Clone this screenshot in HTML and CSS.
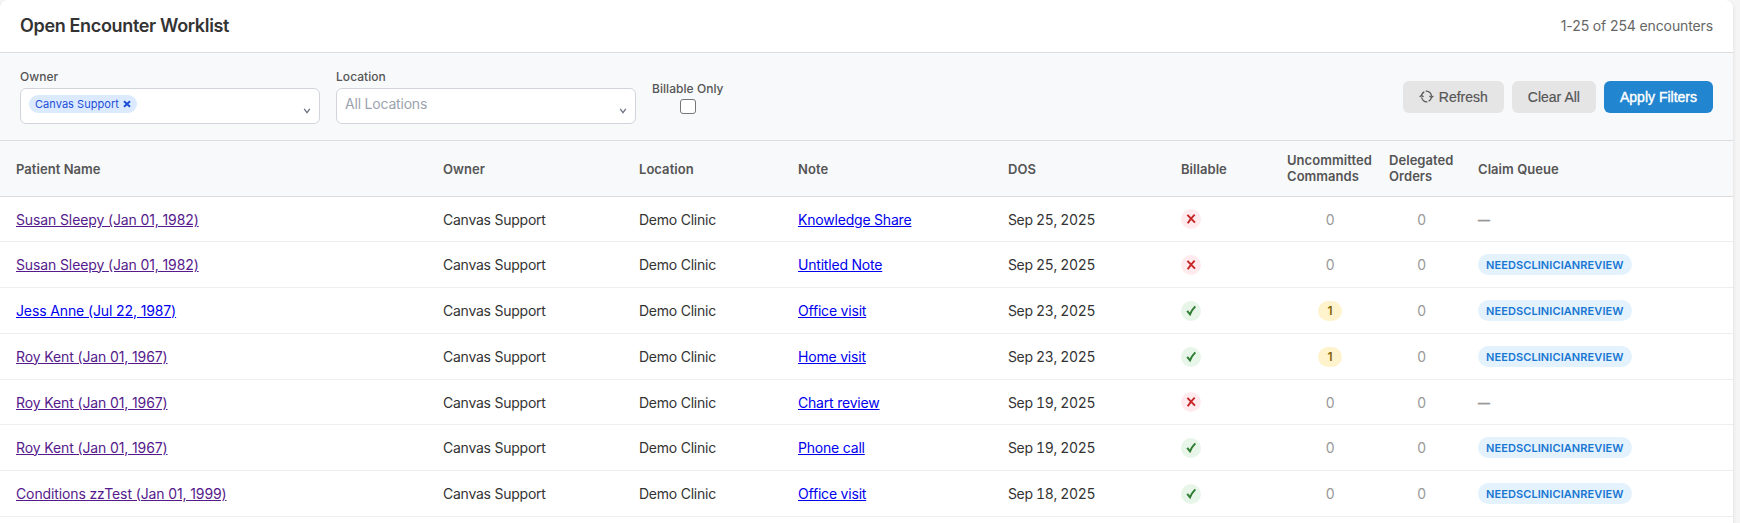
FILE: index.html
```html
<!DOCTYPE html>
<html lang="en">
<head>
<meta charset="utf-8">
<title>Open Encounter Worklist</title>
<link rel="stylesheet" href="styles.css">
</head>
<body>
<svg class="sprite" aria-hidden="true">
  <symbol id="cross" viewBox="0 0 20 20"><path d="M6.4 5.9Q9.6 9.2 14 13.6M13.7 5.6Q9.5 9.6 6.7 14.3" fill="none" stroke="currentColor" stroke-width="2"/></symbol>
  <symbol id="check" viewBox="0 0 20 20"><path d="M6.2 9.9L9 13.4Q10.9 8.8 14.3 5.4" fill="none" stroke="currentColor" stroke-width="2"/></symbol>
</svg>
<main class="panel">
  <header class="panel-header">
    <h1 class="title">Open Encounter Worklist</h1>
    <span class="count">1-25 of 254 encounters</span>
  </header>
  <section class="filters">
    <div class="field">
      <label class="label">Owner</label>
      <div class="select">
        <span class="chip">Canvas Support<svg class="chip-x" viewBox="0 0 8 8"><path d="M1 1.2L7 6.8M7 1.2L1 6.8" stroke="currentColor" stroke-width="2"/></svg></span>
        <svg class="caret" viewBox="0 0 8 6"><path d="M1.2 .8L4 4.6L6.8 .8" fill="none" stroke="currentColor" stroke-width="1.3"/></svg>
      </div>
    </div>
    <div class="field">
      <label class="label">Location</label>
      <div class="select">
        <span class="placeholder">All Locations</span>
        <svg class="caret" viewBox="0 0 8 6"><path d="M1.2 .8L4 4.6L6.8 .8" fill="none" stroke="currentColor" stroke-width="1.3"/></svg>
      </div>
    </div>
    <div class="check-field">
      <label class="label">Billable Only</label>
      <span class="checkbox"></span>
    </div>
    <div class="actions">
      <button class="btn"><svg class="refresh" viewBox="0 0 15 13"><g fill="none" stroke="currentColor" stroke-width="1.2"><path d="M2.5 6.2A5 5 0 0 1 5.3 1.9M6.7 1.2A5.2 5.2 0 0 1 12.5 6.6M12.5 7.2A5 5 0 0 1 9.6 11.2M8.3 11.8A5.2 5.2 0 0 1 2.6 7.2"/><path d="M.6 6.8L2.5 5.4L4.6 6.8M10.4 6L12.5 7.4L14.4 6"/></g></svg>Refresh</button>
      <button class="btn">Clear All</button>
      <button class="btn primary">Apply Filters</button>
    </div>
  </section>
  <table class="worklist">
    <colgroup><col class="c-patient"><col class="c-owner"><col class="c-location"><col class="c-note"><col class="c-dos"><col class="c-billable"><col class="c-commands"><col class="c-orders"><col></colgroup>
    <thead>
      <tr><th>Patient Name</th><th>Owner</th><th>Location</th><th>Note</th><th>DOS</th><th>Billable</th><th class="tight">Uncommitted<br>Commands</th><th class="tight">Delegated<br>Orders</th><th>Claim Queue</th></tr>
    </thead>
    <tbody>
      <tr class="short"><td><a class="visited" href="#p">Susan Sleepy (Jan 01, 1982)</a></td><td class="name">Canvas Support</td><td class="name">Demo Clinic</td><td><a class="note" href="#n">Knowledge Share</a></td><td class="date">Sep 25, 2025</td><td class="flag"><svg class="mark no"><use href="#cross"/></svg></td><td class="num">0</td><td class="num">0</td><td class="none"><span class="dash">—</span></td></tr>
      <tr><td><a class="visited" href="#p">Susan Sleepy (Jan 01, 1982)</a></td><td class="name">Canvas Support</td><td class="name">Demo Clinic</td><td><a class="note" href="#n">Untitled Note</a></td><td class="date">Sep 25, 2025</td><td class="flag"><svg class="mark no"><use href="#cross"/></svg></td><td class="num">0</td><td class="num">0</td><td><span class="queue">NEEDSCLINICIANREVIEW</span></td></tr>
      <tr><td><a href="#p">Jess Anne (Jul 22, 1987)</a></td><td class="name">Canvas Support</td><td class="name">Demo Clinic</td><td><a class="note" href="#n">Office visit</a></td><td class="date">Sep 23, 2025</td><td class="flag"><svg class="mark yes"><use href="#check"/></svg></td><td class="num"><span class="badge">1</span></td><td class="num">0</td><td><span class="queue">NEEDSCLINICIANREVIEW</span></td></tr>
      <tr><td><a class="visited" href="#p">Roy Kent (Jan 01, 1967)</a></td><td class="name">Canvas Support</td><td class="name">Demo Clinic</td><td><a class="note" href="#n">Home visit</a></td><td class="date">Sep 23, 2025</td><td class="flag"><svg class="mark yes"><use href="#check"/></svg></td><td class="num"><span class="badge">1</span></td><td class="num">0</td><td><span class="queue">NEEDSCLINICIANREVIEW</span></td></tr>
      <tr class="short"><td><a class="visited" href="#p">Roy Kent (Jan 01, 1967)</a></td><td class="name">Canvas Support</td><td class="name">Demo Clinic</td><td><a class="note" href="#n">Chart review</a></td><td class="date">Sep 19, 2025</td><td class="flag"><svg class="mark no"><use href="#cross"/></svg></td><td class="num">0</td><td class="num">0</td><td class="none"><span class="dash">—</span></td></tr>
      <tr><td><a class="visited" href="#p">Roy Kent (Jan 01, 1967)</a></td><td class="name">Canvas Support</td><td class="name">Demo Clinic</td><td><a class="note" href="#n">Phone call</a></td><td class="date">Sep 19, 2025</td><td class="flag"><svg class="mark yes"><use href="#check"/></svg></td><td class="num">0</td><td class="num">0</td><td><span class="queue">NEEDSCLINICIANREVIEW</span></td></tr>
      <tr><td><a class="visited" href="#p">Conditions zzTest (Jan 01, 1999)</a></td><td class="name">Canvas Support</td><td class="name">Demo Clinic</td><td><a class="note" href="#n">Office visit</a></td><td class="date">Sep 18, 2025</td><td class="flag"><svg class="mark yes"><use href="#check"/></svg></td><td class="num">0</td><td class="num">0</td><td><span class="queue">NEEDSCLINICIANREVIEW</span></td></tr>
    </tbody>
  </table>
</main>
</body>
</html>
```
FILE: styles.css
```css
* { box-sizing: border-box; }
body {
  margin: 0;
  height: 523px;
  overflow: hidden;
  background: #f5f5f5;
  color: #333;
  font: 14px/20px Inter, "Liberation Sans", sans-serif;
  letter-spacing: -0.12px;
}
.sprite { display: none; }
.panel {
  width: 1733px;
  height: 540px;
  overflow: hidden;
  background: #fff;
  border-radius: 8px;
  box-shadow: 0 2px 4px rgba(0, 0, 0, .1);
}
.panel-header {
  display: flex;
  align-items: center;
  justify-content: space-between;
  height: 53px;
  padding: 0 20px;
  border-bottom: 1px solid #ddd;
}
.title { margin: 0; font-size: 18px; font-weight: 600; letter-spacing: -0.34px; }
.count { color: #666; }
.filters {
  display: flex;
  align-items: center;
  gap: 16px;
  height: 88px;
  padding: 0 20px;
  background: #f8f9fb;
  border-bottom: 1px solid #ddd;
}
.field { display: flex; flex-direction: column; gap: 4px; width: 300px; padding-bottom: 1px; }
.label { color: #555; font-size: 12px; line-height: 15px; font-weight: 500; letter-spacing: .05px; }
.select {
  display: flex;
  justify-content: space-between;
  height: 36px;
  padding: 6px 8px;
  background: #fff;
  border: 1px solid #d1d5db;
  border-radius: 6px;
}
.chip {
  display: flex;
  align-items: center;
  gap: 4px;
  height: 18px;
  padding: 0 6px;
  border-radius: 9px;
  background: #dbeafe;
  color: #1d4ed8;
  font-size: 11px;
  letter-spacing: .05px;
}
.chip-x { width: 8px; height: 8px; }
.placeholder { color: #9ca3af; line-height: 18px; letter-spacing: -.2px; }
.caret { width: 8px; height: 6px; margin-top: 13px; color: #6b7280; }
.check-field { display: flex; flex-direction: column; align-items: center; gap: 3px; padding-top: 2px; }
.checkbox { width: 16px; height: 15px; border: 1px solid #767676; border-radius: 3px; background: #fff; }
.actions { display: flex; gap: 8px; margin-left: auto; }
.btn {
  display: flex;
  align-items: center;
  gap: 5px;
  height: 32px;
  padding: 0 16px;
  border: 0;
  border-radius: 6px;
  background: #e5e5e5;
  color: #555;
  font: 14px/20px "Liberation Sans", Arial, sans-serif;
  -webkit-text-stroke: .2px currentColor;
}
.btn.primary { background: #2185d0; color: #fff; -webkit-text-stroke: .4px #fff; }
.refresh { width: 15px; height: 13px; }
.worklist { width: 1733px; table-layout: fixed; border-collapse: separate; border-spacing: 0; }
.c-patient { width: 427px; }
.c-owner { width: 196px; }
.c-location { width: 159px; }
.c-note { width: 210px; }
.c-dos { width: 173px; }
.c-billable { width: 114px; }
.c-commands { width: 102px; }
.c-orders { width: 81px; }
th {
  height: 56px;
  padding: 0 0 0 16px;
  background: #f8f9fb;
  border-bottom: 1px solid #ddd;
  color: #555;
  font-size: 13px;
  line-height: 16px;
  font-weight: 600;
  text-align: left;
  letter-spacing: .05px;
}
th.tight { padding-left: 8px; padding-bottom: 1px; }
td { height: 46px; padding: 0 0 0 16px; border-bottom: 1px solid #eee; }
td.num { padding: 0; text-align: center; color: #999; }
td.none { color: #999; }
.short td { height: 45px; padding-top: 2px; }
.short td.flag { padding-top: 0; }
.dash { display: inline-block; transform: scaleX(.85); transform-origin: left; -webkit-text-stroke: .4px; }
td.name { letter-spacing: -.24px; }
td.date { font-variant-numeric: tabular-nums; letter-spacing: -.36px; }
a { color: #0000ee; text-decoration: underline; }
a.visited { color: #551a8b; }
a.note { letter-spacing: -.2px; }
.mark { display: block; width: 20px; height: 20px; border-radius: 50%; }
.mark.no { background: #ffebee; color: #c62828; }
.mark.yes { background: #e8f5e9; color: #2e7d32; }
.badge {
  display: inline-block;
  width: 24px;
  height: 20px;
  border-radius: 10px;
  background: #fff3cd;
  color: #856404;
  font-size: 12px;
  font-weight: 600;
}
.queue {
  display: inline-block;
  height: 21px;
  padding: 0 8px;
  border-radius: 11px;
  background: #e3f2fd;
  color: #1976d2;
  font-size: 11px;
  line-height: 22px;
  font-weight: 600;
  letter-spacing: .09px;
}
```
